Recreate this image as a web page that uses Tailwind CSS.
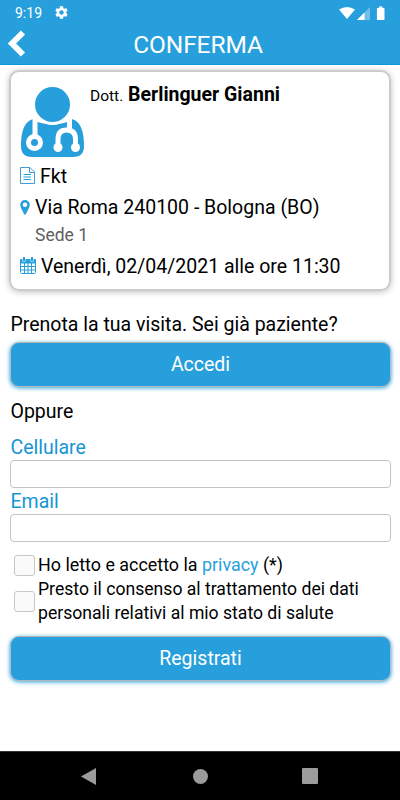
<!DOCTYPE html>
<html lang="it">
<head>
<meta charset="utf-8">
<title>Conferma</title>
<script src="https://cdn.jsdelivr.net/npm/@tailwindcss/browser@4"></script>
</head>
<body class="bg-white">
<div class="flex h-[800px] w-[400px] flex-col overflow-hidden bg-white font-[Roboto,sans-serif] text-[19.5px] leading-6 text-black">
  <header class="h-[65px] shrink-0 border-b border-[#0d96d8] bg-[#269fdc] text-white">
    <div class="flex h-6 items-center pt-[1px] pl-[15px] pr-[14px]">
      <span class="w-[39px] text-[14px] leading-6 whitespace-nowrap">9:19</span>
      <svg class="size-[15px]" viewBox="0 0 24 24" fill="currentColor"><path d="M19.43 12.98c.04-.32.07-.64.07-.98s-.03-.66-.07-.98l2.11-1.65c.19-.15.24-.42.12-.64l-2-3.46c-.12-.22-.39-.3-.61-.22l-2.49 1c-.52-.4-1.08-.73-1.69-.98l-.38-2.65C14.46 2.18 14.25 2 14 2h-4c-.25 0-.46.18-.49.42l-.38 2.65c-.61.25-1.17.59-1.69.98l-2.49-1c-.23-.09-.49 0-.61.22l-2 3.46c-.13.22-.07.49.12.64l2.11 1.65c-.04.32-.07.65-.07.98s.03.66.07.98l-2.11 1.65c-.19.15-.24.42-.12.64l2 3.46c.12.22.39.3.61.22l2.49-1c.52.4 1.08.73 1.69.98l.38 2.65c.03.24.24.42.49.42h4c.25 0 .46-.18.49-.42l.38-2.65c.61-.25 1.17-.59 1.69-.98l2.49 1c.23.09.49 0 .61-.22l2-3.46c.12-.22.07-.49-.12-.64l-2.11-1.65zM12 15.500c-1.930 0-3.500-1.570-3.500-3.500s1.570-3.500 3.500-3.500 3.500 1.570 3.500 3.500-1.570 3.500-3.500 3.500z"/></svg>
      <svg class="ml-auto h-[14px] w-[47px]" viewBox="0 0 47 14" fill="currentColor"><path d="M0 3.500Q8 -1.700 16 3.500L8 13Z"/><path opacity=".35" d="M31 1V14H18Z"/><path d="M25.500 6.500V14H18Z"/><path d="M40 .500h3.500V2h1.200q.8 0 .8.800v10.400q0 .8-.8.800h-6q-.8 0-.8-.8V2.800q0-.8.8-.8H40Z"/></svg>
    </div>
    <div class="grid h-10 grid-cols-[60px_1fr_60px] items-center">
      <svg class="ml-[7px] -mt-[3px] h-[27px] w-[19px]" viewBox="0 0 19 27" fill="none" stroke="currentColor" stroke-width="6"><path d="M16 2.500L5 13.500L16 24.500"/></svg>
      <h1 class="-ml-1 pt-[1px] text-center text-[24.5px] leading-10 tracking-[-0.1px]">CONFERMA</h1>
    </div>
  </header>

  <main class="flex-1 px-[10px] pt-[5px]">
    <section class="mr-[-1px] ml-[-1px] h-[221px] rounded-[10px] border-2 border-[#cbcbcb] px-[9px] shadow-[0_1px_6px_rgba(0,0,0,0.25)]">
      <div class="flex h-[86px] pt-[14px]">
        <svg class="h-[72px] w-[66px] shrink-0" viewBox="0 0 66 72">
          <path fill="#269fdc" d="M13 33C3 36 1 48 1 60Q1 71 12 71H53Q64 71 64 60C64 48 62 36 52 33C45 40 20 40 13 33Z"/>
          <circle cx="32.500" cy="19" r="20" fill="#fff"/>
          <circle cx="32.500" cy="18.500" r="17.500" fill="#269fdc"/>
          <g fill="none" stroke="#fff" stroke-width="5"><path d="M15 31V50M49.500 31V44M38 61V53Q38 44 46.500 44Q55.500 44 55.500 53V61"/><circle cx="14.500" cy="56.500" r="6"/></g>
          <g fill="#fff"><circle cx="38" cy="61.500" r="4.500"/><circle cx="55.500" cy="61.500" r="4.500"/></g>
        </svg>
        <p class="mt-[-3px] ml-[4px] h-6 whitespace-nowrap text-[15.5px] leading-6"><span>Dott.</span> <strong class="ml-[1px] text-[19.5px] font-bold">Berlinguer Gianni</strong></p>
      </div>
      <div class="mt-[5px] flex h-6 items-center">
        <svg class="h-[17px] w-[15px]" viewBox="0 0 15 17" fill="none" stroke="#459cd4"><path d="M.500 .500H10L14.500 5V16.500H.500ZM9.500 1V5.500H14"/><path stroke="#269fdc" d="M3.500 7.500H11M3.500 10H11M3.500 12.500H11"/></svg>
        <span class="ml-[5px] pt-[3px]">Fkt</span>
      </div>
      <div class="mt-[8px] flex h-6 items-center">
        <svg class="h-[15px] w-[10px]" viewBox="0 0 10 15"><path fill="#269fdc" fill-rule="evenodd" d="M5 0a4.800 4.800 0 0 1 4.800 4.800C9.800 7 7.500 11 6 14q-1 1.500-2 0C2.500 11 .2 7 .2 4.800A4.800 4.800 0 0 1 5 0ZM5 2.500a2.300 2.300 0 1 0 0 4.600a2.300 2.300 0 1 0 0-4.600Z"/></svg>
        <span class="ml-[5px] pt-[2px] whitespace-nowrap">Via Roma 240100 - Bologna (BO)</span>
      </div>
      <p class="mt-[3px] ml-[15px] h-6 text-[17.5px] leading-[26px] text-[#606060]">Sede 1</p>
      <div class="mt-[7px] flex h-6 items-center">
        <svg class="h-[17px] w-[16px]" viewBox="0 0 16 17" fill="none" stroke="#269fdc"><path d="M.500 3.500V15.500Q.500 16.500 1.500 16.500H14.500Q15.500 16.500 15.500 15.500V3.500M1 9.500H15M1 13H15M4.500 6V16M8 6V16M11.500 6V16"/><path fill="#269fdc" stroke="none" d="M0 3Q0 2 1 2H15Q16 2 16 3V6.500H0Z"/><path stroke="#fff" stroke-width="3" d="M4 0V4.500M12 0V4.500"/><path stroke-width="2" d="M4 0V4M12 0V4"/></svg>
        <span class="ml-[5px] pt-[3px] whitespace-nowrap">Venerdì, 02/04/2021 alle ore 11:30</span>
      </div>
    </section>

    <p class="mt-[21px] h-6 pl-[0.5px] leading-[26px] whitespace-nowrap">Prenota la tua visita. Sei già paziente?</p>
    <button class="mt-[6px] block h-[45px] w-[381px] rounded-[9px] border border-[#b5b8ba] bg-[#269fdc] pt-[1px] text-white shadow-[0_1px_4px_#269fdc]">Accedi</button>
    <p class="mt-[12px] h-6 pl-[0.5px] leading-[26px]">Oppure</p>
    <label class="mt-[12px] block h-6 pl-[0.5px] leading-[26px] text-[#1595d5]" for="tel">Cellulare</label>
    <input id="tel" class="mt-[1px] block h-7 w-[381px] rounded-[4px] border border-[#c4c4c4] bg-white px-2">
    <label class="block h-[26px] pl-[0.5px] leading-[27px] text-[#1595d5]" for="mail">Email</label>
    <input id="mail" class="block h-7 w-[381px] rounded-[4px] border border-[#c4c4c4] bg-white px-2">
    <div class="mt-[11px] flex h-6 items-center pl-1 text-[17.9px]">
      <input type="checkbox" class="mr-[3px] size-[21px] appearance-none rounded-[3px] border border-[#c8c8c8] bg-[#fafafa]">
      <span class="whitespace-nowrap">Ho letto e accetto la <a class="text-[#269fdc]">privacy</a> (*)</span>
    </div>
    <div class="flex h-12 items-center pl-1 text-[17.6px]">
      <input type="checkbox" class="mr-[3px] size-[21px] appearance-none rounded-[3px] border border-[#c8c8c8] bg-[#fafafa]">
      <span class="whitespace-nowrap">Presto il consenso al trattamento dei dati<br>personali relativi al mio stato di salute</span>
    </div>
    <button class="mt-[11px] block h-[45px] w-[381px] rounded-[9px] border border-[#b5b8ba] bg-[#269fdc] pt-[1px] text-white shadow-[0_1px_4px_#269fdc]">Registrati</button>
  </main>

  <nav class="flex h-[49px] shrink-0 items-center border-t border-[#333] bg-black text-[#9b9b9b]">
    <svg class="ml-[81px] h-[17px] w-[15px]" viewBox="0 0 15 17" fill="currentColor"><path d="M15 0V17L0 8.500Z"/></svg>
    <span class="ml-[97px] size-[15px] rounded-full bg-[#9b9b9b]"></span>
    <span class="ml-[94px] size-4 rounded-[1px] bg-[#9b9b9b]"></span>
  </nav>
</div>
</body>
</html>
